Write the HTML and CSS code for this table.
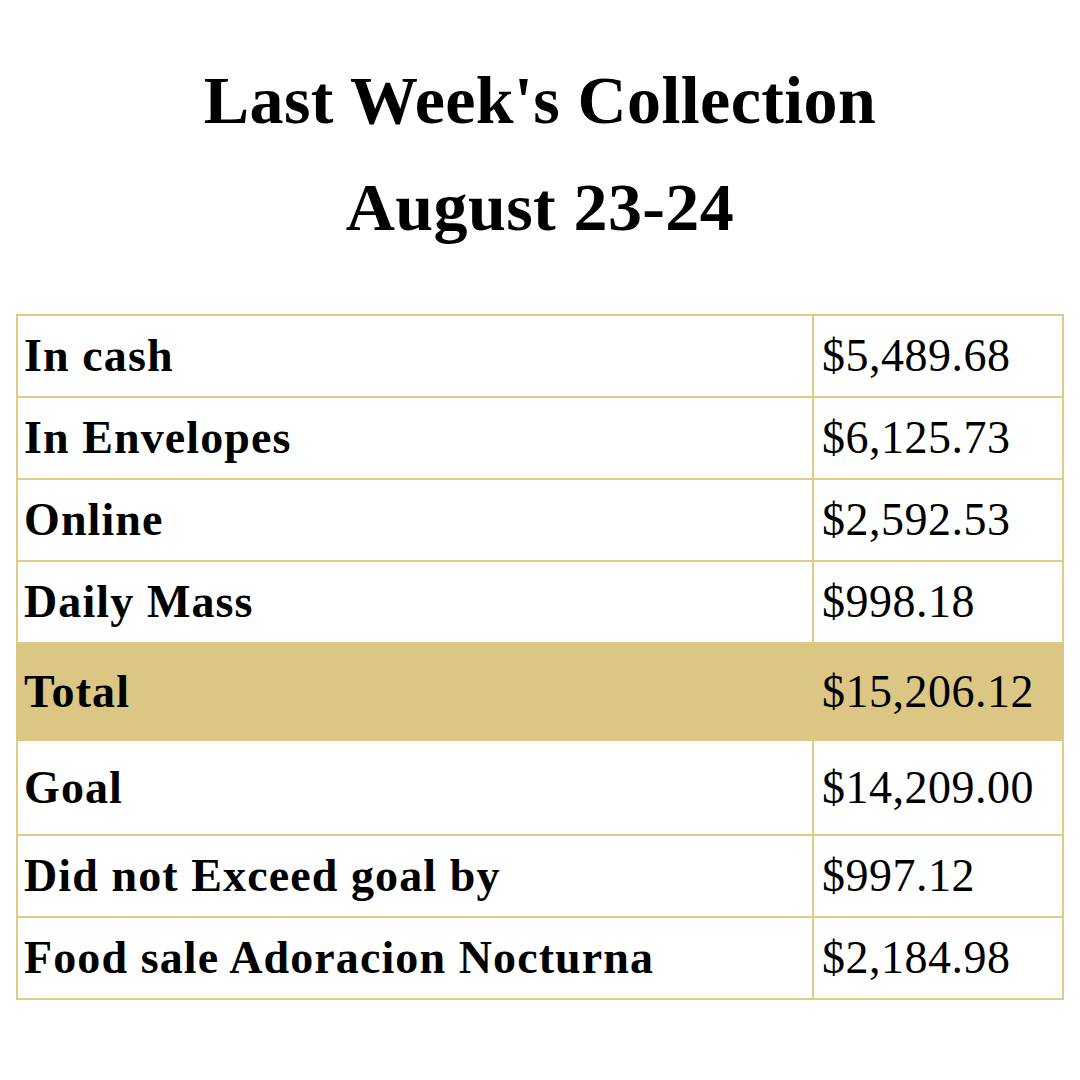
FILE: index.html
```html
<!DOCTYPE html>
<html>
<head>
<meta charset="utf-8">
<link rel="stylesheet" href="styles.css">
</head>
<body>
<header class="title">
  <h1>Last Week's Collection</h1>
  <h1>August 23-24</h1>
</header>
<table class="collection">
  <tr><td class="label">In cash</td><td class="amount">$5,489.68</td></tr>
  <tr><td class="label">In Envelopes</td><td class="amount">$6,125.73</td></tr>
  <tr><td class="label">Online</td><td class="amount">$2,592.53</td></tr>
  <tr><td class="label">Daily Mass</td><td class="amount">$998.18</td></tr>
  <tr class="total tall"><td class="label">Total</td><td class="amount">$15,206.12</td></tr>
  <tr class="goal"><td class="label">Goal</td><td class="amount">$14,209.00</td></tr>
  <tr><td class="label">Did not Exceed goal by</td><td class="amount">$997.12</td></tr>
  <tr><td class="label">Food sale Adoracion Nocturna</td><td class="amount">$2,184.98</td></tr>
</table>
</body>
</html>
```

FILE: styles.css
```css
html, body {
  margin: 0;
  padding: 0;
  background: #ffffff;
  width: 1080px;
  height: 1080px;
  overflow: hidden;
}
body {
  font-family: "Liberation Serif", "DejaVu Serif", serif;
  color: #000;
}
.title {
  padding-top: 47px;
  text-align: center;
}
.title h1 {
  margin: 0;
  font-size: 68px;
  font-weight: bold;
  line-height: 107px;
  letter-spacing: 0.4px;
}
.collection {
  margin: 53px 0 0 16px;
  width: 1048px;
  border-collapse: collapse;
  table-layout: fixed;
}
.collection td {
  border: 2px solid #dfca86;
  height: 80px;
  padding: 0 6px;
  vertical-align: middle;
  line-height: 1;
  white-space: nowrap;
}
.collection .label {
  width: 782px;
  font-weight: bold;
  font-size: 46px;
  letter-spacing: 1.1px;
}
.collection .amount {
  padding-left: 8px;
  font-size: 46px;
  font-weight: normal;
  letter-spacing: 0.5px;
}
.collection .tall td {
  height: 95px;
}
.collection .goal td {
  height: 93px;
}
.collection .total td {
  background: #dbc684;
  border-color: #dbc684;
}
```
